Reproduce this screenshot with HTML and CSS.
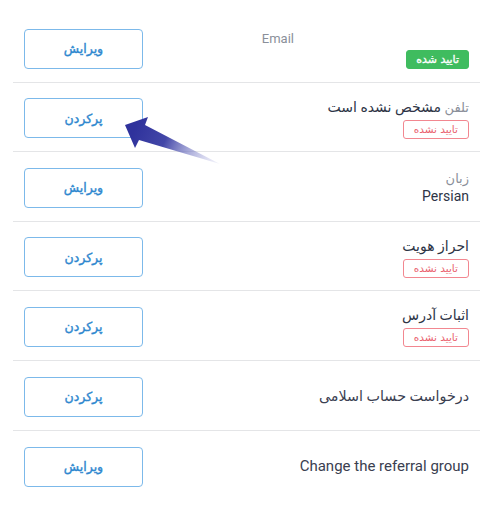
FILE: index.html
```html
<!DOCTYPE html>
<html lang="fa">
<head>
<meta charset="utf-8">
<link rel="stylesheet" href="styles.css">
</head>
<body>
<div class="list" dir="rtl">
  <div class="row">
    <div class="info">
      <div class="line"><span class="masked"></span><span class="key latin">Email</span></div>
      <span class="badge ok">تایید شده</span>
    </div>
    <button class="btn">ویرایش</button>
  </div>
  <div class="row">
    <div class="info">
      <div class="line"><span class="key">تلفن</span> <span class="val">مشخص نشده است</span></div>
      <span class="badge no">تایید نشده</span>
    </div>
    <button class="btn">پرکردن</button>
  </div>
  <div class="row">
    <div class="info">
      <div class="line small"><span class="key">زبان</span></div>
      <div class="line"><span class="val latin">Persian</span></div>
    </div>
    <button class="btn">ویرایش</button>
  </div>
  <div class="row">
    <div class="info">
      <div class="line"><span class="val">احراز هویت</span></div>
      <span class="badge no">تایید نشده</span>
    </div>
    <button class="btn">پرکردن</button>
  </div>
  <div class="row">
    <div class="info">
      <div class="line"><span class="val">اثبات آدرس</span></div>
      <span class="badge no">تایید نشده</span>
    </div>
    <button class="btn">پرکردن</button>
  </div>
  <div class="row">
    <div class="info">
      <div class="line"><span class="val plain">درخواست حساب اسلامی</span></div>
    </div>
    <button class="btn">پرکردن</button>
  </div>
  <div class="row last">
    <div class="info">
      <div class="line"><span class="val plain en">Change the referral group</span></div>
    </div>
    <button class="btn">ویرایش</button>
  </div>
</div>
<svg class="arrow" width="500" height="510" viewBox="0 0 500 510" aria-hidden="true">
  <defs>
    <linearGradient id="ag" x1="135" y1="128" x2="220" y2="165" gradientUnits="userSpaceOnUse">
      <stop offset="0" stop-color="#2f329c"/>
      <stop offset="0.35" stop-color="#4347a8"/>
      <stop offset="1" stop-color="#b9bbe6" stop-opacity="0.15"/>
    </linearGradient>
  </defs>
  <polygon points="125,125 148,117 145,125 220,164 139,140 135,148" fill="url(#ag)"/>
</svg>
</body>
</html>
```
FILE: styles.css
```css
html, body {
  margin: 0;
  padding: 0;
  background: #ffffff;
}
body {
  font-family: Roboto, "DejaVu Sans", sans-serif;
  color: #2d3446;
  width: 500px;
  height: 510px;
  overflow: hidden;
  position: relative;
}
.list {
  margin: 13px 20px 0 13px;
}
.row {
  display: flex;
  justify-content: space-between;
  align-items: center;
  height: 69.6px;
  box-sizing: border-box;
  padding: 2.5px 11px 0;
  border-bottom: 1px solid #e4e5e7;
}
.row.last {
  border-bottom: none;
}
.info {
  display: flex;
  flex-direction: column;
  align-items: flex-start;
}
.line {
  font-size: 14px;
  line-height: 19px;
  white-space: nowrap;
}
.line.small {
  line-height: 17px;
}
.key {
  color: #8a8f9a;
  font-size: 13px;
}
.masked {
  display: inline-block;
  width: 175px;
}
.val {
  color: #2d3446;
  font-size: 14px;
}
.val.latin {
  font-family: Roboto, sans-serif;
  font-size: 14px;
}
.val.plain {
  color: #3a4050;
  font-size: 14.3px;
}
.val.en {
  font-family: Roboto, sans-serif;
  font-size: 15px;
}
.badge {
  display: inline-block;
  margin-top: 3px;
  height: 19px;
  box-sizing: border-box;
  border-radius: 3px;
  font-size: 10.5px;
  line-height: 17px;
  padding: 0 9px;
  font-family: "DejaVu Sans", sans-serif;
}
.badge.ok {
  background: #3fbc5f;
  color: #ffffff;
  border: 1px solid #3fbc5f;
  font-size: 11px;
  padding: 0 9px;
  margin-top: 2px;
  -webkit-text-stroke: 0.3px #ffffff;
}
.badge.no {
  background: #ffffff;
  color: #ea6470;
  border: 1px solid #f28790;
  padding: 0 10px;
}
.btn {
  width: 119px;
  height: 40px;
  border: 1.5px solid #7cb9ea;
  border-radius: 4px;
  background: #ffffff;
  color: #2f88cf;
  font-family: "DejaVu Sans", sans-serif;
  font-size: 12.5px;
  font-weight: normal;
  -webkit-text-stroke: 0.4px #2f88cf;
  padding: 0;
}
.arrow {
  position: absolute;
  left: 0;
  top: 0;
  pointer-events: none;
}
```
